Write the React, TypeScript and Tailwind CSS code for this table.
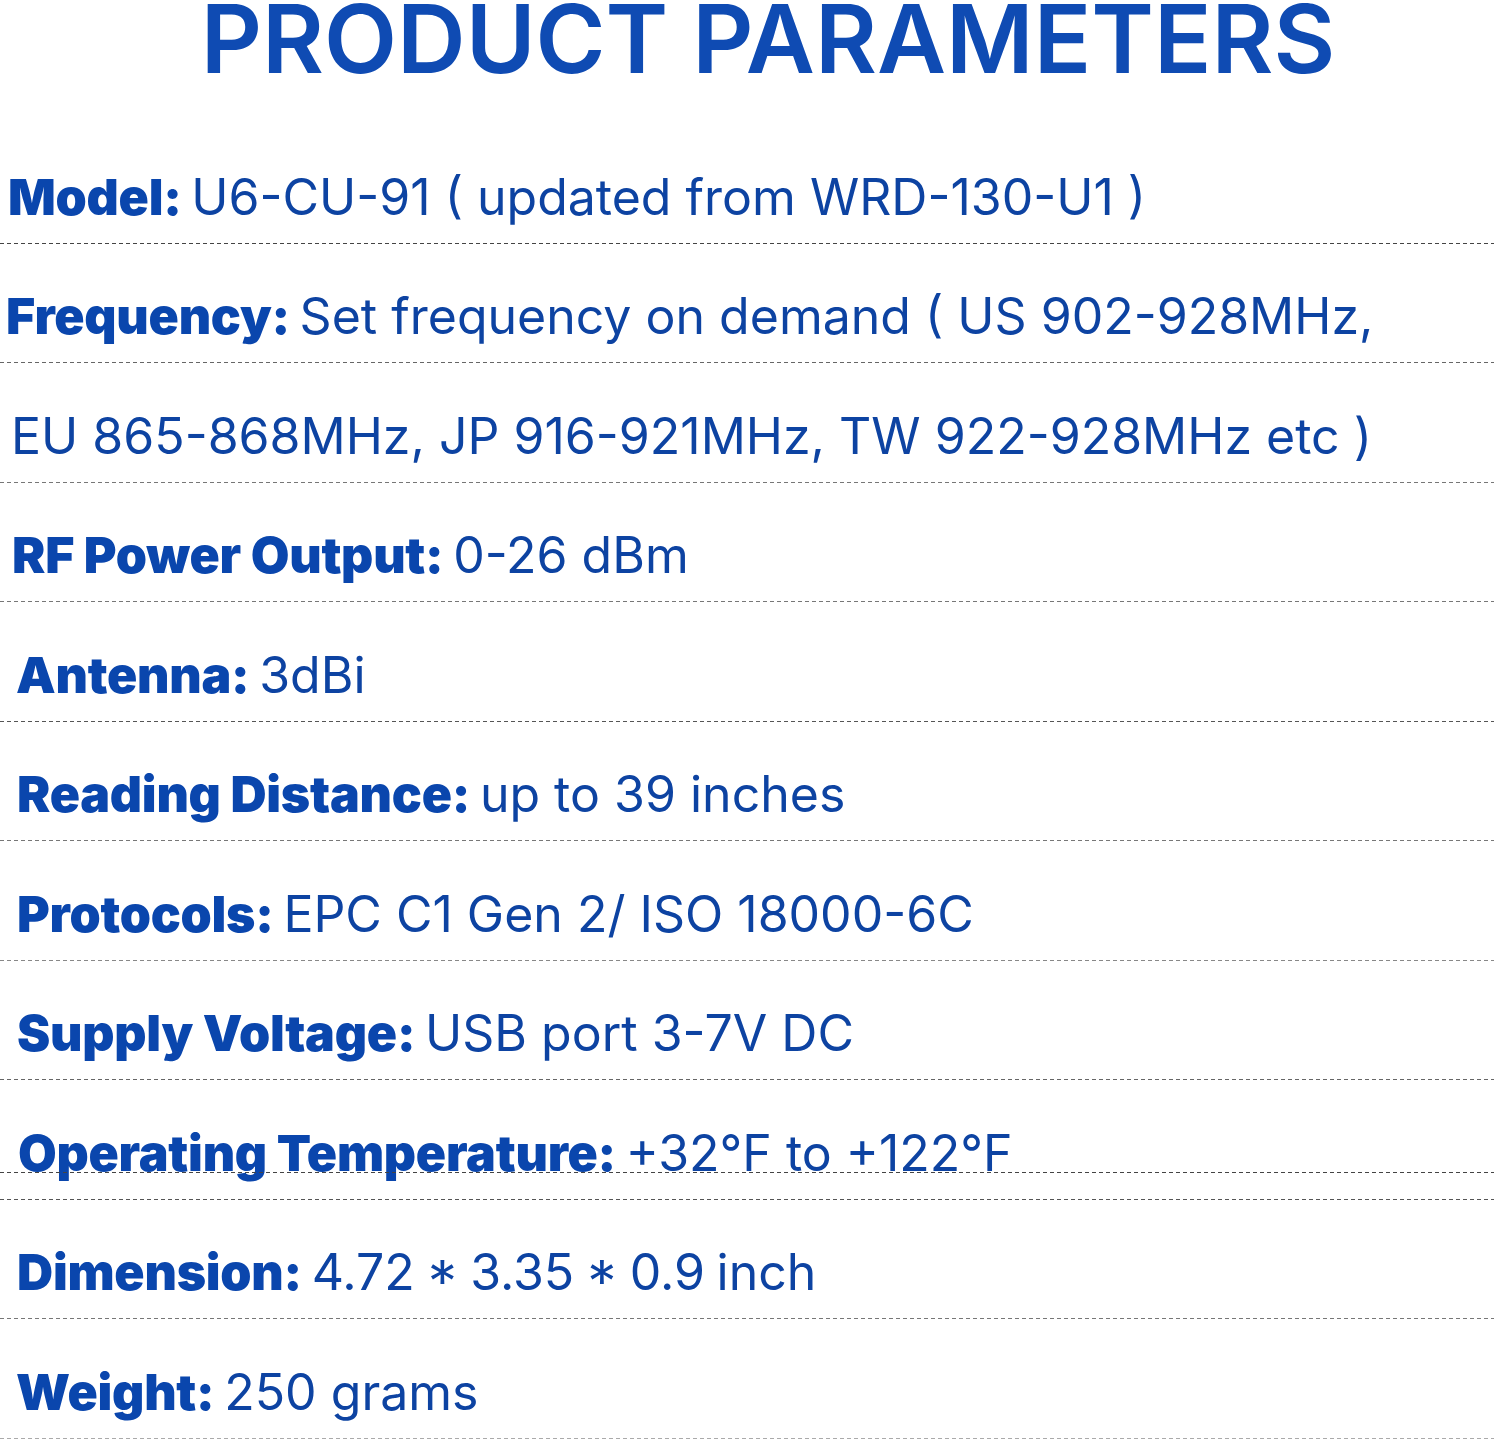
const rows = [
  { label: "Model:", value: "U6-CU-91 ( updated from WRD-130-U1 )", pl: "pl-[8px]", line: "#444" },
  { label: "Frequency:", value: "Set frequency on demand ( US 902-928MHz,", pl: "pl-[6px]", line: "#666" },
  { label: "", value: "EU 865-868MHz, JP 916-921MHz, TW 922-928MHz etc )", pl: "pl-[11px]", line: "#777" },
  { label: "RF Power Output:", value: "0-26 dBm", pl: "pl-[12px]", line: "#777" },
  { label: "Antenna:", value: "3dBi", pl: "pl-[16px]", line: "#555" },
  { label: "Reading Distance:", value: "up to 39 inches", pl: "pl-[17px]", line: "#777" },
  { label: "Protocols:", value: "EPC C1 Gen 2/ ISO 18000-6C", pl: "pl-[17px]", line: "#888" },
  { label: "Supply Voltage:", value: "USB port 3-7V DC", pl: "pl-[17px]", line: "#666" },
  { label: "Operating Temperature:", value: "+32°F to +122°F", pl: "pl-[18px]", line: "#555", extra: true },
  { label: "Dimension:", value: "4.72 * 3.35 * 0.9 inch", pl: "pl-[17px]", line: "#777", tight: true },
  { label: "Weight:", value: "250 grams", pl: "pl-[16px]", line: "#aaa" },
];

const Dashed = ({ color }: { color: string }) => (
  <div
    className="h-px w-[1494px]"
    style={{ backgroundImage: `repeating-linear-gradient(to right, ${color} 0 4px, transparent 4px 7px)` }}
  />
);

const App = () => {
  return (
    <div className="w-[1500px] h-[1440px] bg-white overflow-hidden font-['Inter',sans-serif] text-[#0c45a8]">
      <header className="h-[124px] flex justify-center pl-[36px]">
        <h1 className="mt-[-9px] text-[95px] leading-[95px] font-semibold text-[#0f4bb3]">
          PRODUCT PARAMETERS
        </h1>
      </header>
      <main className="flex flex-col">
        {rows.map((row, i) => (
          <div key={i} className="relative flex flex-col h-[119.5px] justify-end">
            <p className={`${row.pl} pb-[16px] text-[50px] leading-[60px] whitespace-nowrap`}>
              {row.label && (
                <span className="font-black tracking-[-0.25px] text-[#0a46ad]">{row.label} </span>
              )}
              <span className={`font-normal text-[#0d43a2] ${row.tight ? "[word-spacing:-2.5px]" : ""}`}>
                {row.value}
              </span>
            </p>
            {row.extra && (
              <div className="absolute left-0 bottom-[27px]">
                <Dashed color="#444" />
              </div>
            )}
            <Dashed color={row.line} />
          </div>
        ))}
      </main>
    </div>
  );
};

export default App;
